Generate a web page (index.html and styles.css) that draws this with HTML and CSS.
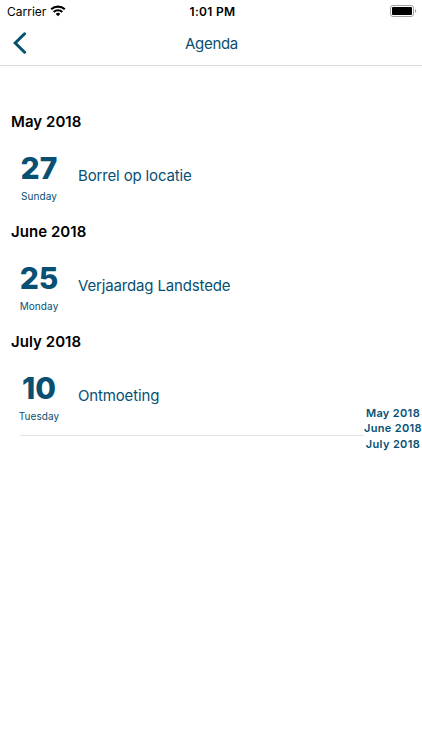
FILE: index.html
```html
<!DOCTYPE html>
<html lang="nl">
<head>
    <meta charset="UTF-8">
    <meta name="viewport" content="width=device-width, initial-scale=1.0">
    <title>Agenda</title>
    <link rel="stylesheet" href="styles.css">
</head>
<body>

<div class="status-bar">
    <div class="carrier">
        <span>Carrier</span>
        <svg class="wifi" width="16" height="12" viewBox="0 0 16 12" fill="none" stroke="#000" stroke-width="2.2">
            <path d="M1.2 4.3a9.8 9.8 0 0 1 13.6 0"/>
            <path d="M3.7 7a6.2 6.2 0 0 1 8.6 0"/>
            <path d="M5.7 8.9a3.3 3.3 0 0 1 4.6 0L8 11.3z" fill="#000" stroke="none"/>
        </svg>
    </div>
    <div class="time">1:01 PM</div>
    <svg class="battery" width="27" height="12" viewBox="0 0 27 12">
        <rect x="0.5" y="0.5" width="23" height="11" rx="2.5" fill="#fff" stroke="#a0a0a0"/>
        <rect x="2" y="2" width="20" height="8" rx="1" fill="#000"/>
        <path d="M25 4a2.2 2.2 0 0 1 0 4z" fill="#a0a0a0"/>
    </svg>
</div>

<header class="nav-bar">
    <a class="back" href="#">
        <svg width="14" height="22" viewBox="0 0 14 22" fill="none" stroke="#05506f" stroke-width="3" stroke-linecap="round">
            <path d="M11.6 1.8L2.2 11l9.4 9.2"/>
        </svg>
    </a>
    <h1>Agenda</h1>
</header>

<main class="agenda">
    <section class="month">
        <h2>May 2018</h2>
        <div class="event">
            <div class="date">
                <div class="day">27</div>
                <div class="weekday">Sunday</div>
            </div>
            <div class="title">Borrel op locatie</div>
        </div>
    </section>
    <section class="month">
        <h2>June 2018</h2>
        <div class="event">
            <div class="date">
                <div class="day">25</div>
                <div class="weekday">Monday</div>
            </div>
            <div class="title">Verjaardag Landstede</div>
        </div>
    </section>
    <section class="month">
        <h2>July 2018</h2>
        <div class="event">
            <div class="date">
                <div class="day">10</div>
                <div class="weekday">Tuesday</div>
            </div>
            <div class="title">Ontmoeting</div>
        </div>
    </section>
</main>

<!-- section index, floats over the list -->
<nav class="month-index">
    <a href="#">May 2018</a>
    <a href="#">June 2018</a>
    <a href="#">July 2018</a>
</nav>

</body>
</html>
```
FILE: styles.css
```css
body {
    font-family: Inter, sans-serif;
    background-color: #fff;
    color: #075073;
    margin: 0;
    min-height: 750px;
    position: relative;
}

a {
    color: inherit;
    text-decoration: none;
}

.status-bar {
    display: grid;
    grid-template-columns: 1fr auto 1fr;
    align-items: center;
    height: 22px;
    padding: 0 5px 0 7px;
    color: #000;
    font-size: 12px;
}

.carrier {
    display: flex;
    align-items: center;
    gap: 4px;
}

.time {
    padding-left: 1px;
    font-weight: 600;
    letter-spacing: 0.3px;
}

.battery {
    justify-self: end;
}

.nav-bar {
    display: grid;
    grid-template-columns: 1fr auto 1fr;
    align-items: center;
    height: 43px;
    padding: 0 12px 0 13px;
    border-bottom: 1px solid #dcdcdc;
}

.back svg {
    display: block;
    margin-top: -1px;
}

.nav-bar h1 {
    margin: 0;
    font-size: 15px;
    font-weight: 400;
    letter-spacing: -0.3px;
}

.agenda {
    padding-top: 36px;
}

.month h2 {
    margin: 0;
    padding-left: 11px;
    color: #000;
    font-size: 15px;
    font-weight: 600;
    line-height: 40px;
    letter-spacing: 0.05px;
}

.event {
    display: flex;
    height: 70px;
}

.month:last-child .event {
    height: 73px;
    margin-left: 20px;
    border-bottom: 1px solid #e2e2e2;
}

.month:last-child .date {
    margin-left: -20px;
}

.date {
    width: 78px;
    padding-top: 9px;
    text-align: center;
}

.day {
    font-size: 30px;
    font-weight: 800;
    line-height: 34px;
}

.weekday {
    padding-top: 1px;
    font-size: 10px;
    line-height: 20px;
    letter-spacing: 0.1px;
}

.title {
    padding-top: 24px;
    font-size: 15px;
    line-height: 20px;
    letter-spacing: -0.15px;
}

.month-index {
    position: absolute;
    top: 406px;
    right: 0;
    display: flex;
    flex-direction: column;
    background-color: #fff;
    text-align: center;
    font-size: 11px;
    font-weight: 600;
    line-height: 15px;
    letter-spacing: 0.35px;
}

.month-index a:last-child {
    padding-top: 1px;
}
```
